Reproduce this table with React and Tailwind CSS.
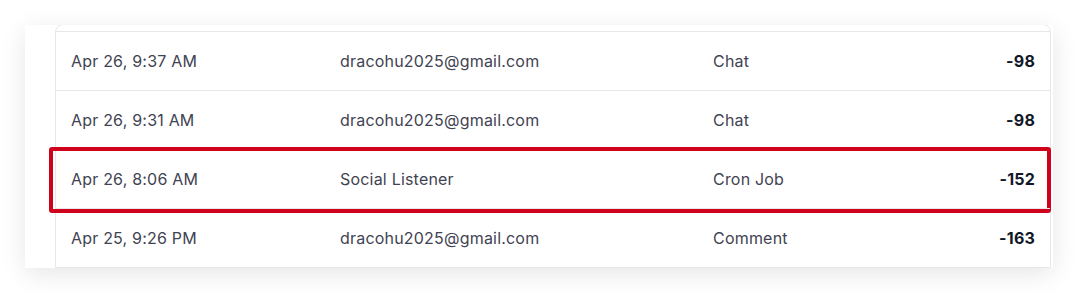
const ROWS = [
  { time: 'Apr 26, 9:37 AM', user: 'dracohu2025@gmail.com', source: 'Chat', amount: '-98' },
  { time: 'Apr 26, 9:31 AM', user: 'dracohu2025@gmail.com', source: 'Chat', amount: '-98' },
  { time: 'Apr 26, 8:06 AM', user: 'Social Listener', source: 'Cron Job', amount: '-152', marked: true },
  { time: 'Apr 25, 9:26 PM', user: 'dracohu2025@gmail.com', source: 'Comment', amount: '-163' },
];

const App = () => {
  return (
    <div className="w-[1080px] h-[294px] bg-white pt-[25px] pl-[25px]" style={{ fontFamily: 'Inter, "Noto Sans", sans-serif' }}>
      {/* Card */}
      <div className="w-[1028px] h-[243px] bg-white overflow-hidden shadow-[0_6px_24px_rgba(0,0,0,0.10)] pl-[30px] pr-[2px]">
        <div className="relative border border-gray-200 rounded-t-lg -mt-px">
          <div className="h-[6px]" />
          {ROWS.map((row) => (
            <div key={row.time}
              className="relative grid grid-cols-[269px_373px_1fr_auto] items-center h-[59px] border-t border-gray-200 text-base tracking-[0.2px] text-[#3f4352]">
              <span className="px-[15px]">{row.time}</span>
              <span className="px-[15px]">{row.user}</span>
              <span className="px-[15px]">{row.source}</span>
              <span className="px-[15px] text-right font-bold text-gray-900">{row.amount}</span>
              {row.marked && (
                <div className="absolute left-[-7px] right-[-1px] top-[-3px] bottom-[-5px] border-[4px] border-[#d0021b] rounded-[3px] pointer-events-none" />
              )}
            </div>
          ))}
        </div>
      </div>
    </div>
  );
};

export default App;
